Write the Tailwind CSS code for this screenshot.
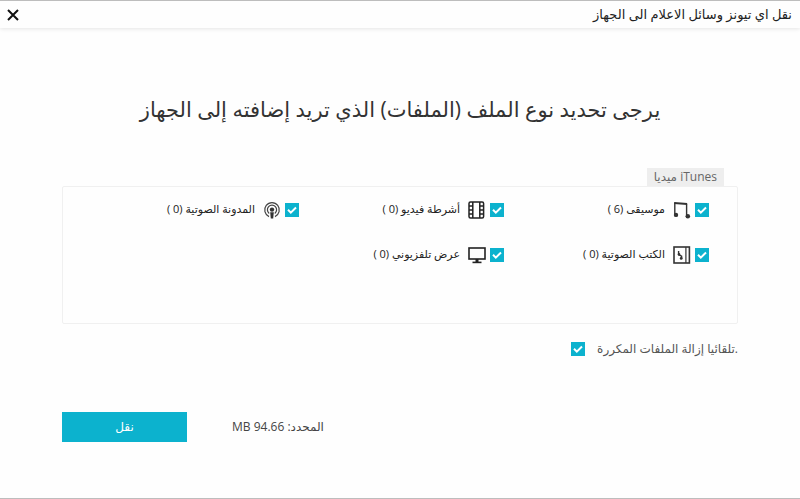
<!DOCTYPE html>
<html lang="ar" dir="rtl">
<head>
  <meta charset="UTF-8" />
  <meta name="viewport" content="width=device-width, initial-scale=1" />
  <title>نقل اي تيونز وسائل الاعلام الى الجهاز</title>
  <script src="https://cdn.jsdelivr.net/npm/@tailwindcss/browser@4"></script>
</head>
<body class="flex min-h-screen flex-col border-y border-[#bdbdbd] bg-[#fefefe] font-['Open_Sans','Noto_Sans','DejaVu_Sans',sans-serif] text-[#333]">

  <!-- Title bar -->
  <header class="flex h-[27px] items-center justify-between px-2 shadow-[0_1px_4px_rgba(0,0,0,0.1)]">
    <h1 class="text-[13px] text-[#222]">نقل اي تيونز وسائل الاعلام الى الجهاز</h1>
    <button type="button" aria-label="إغلاق" class="-me-px size-3">
      <svg viewBox="0 0 12 12" class="block size-3" fill="none" stroke="#111" stroke-width="2">
        <path d="M1 1l10 10M11 1L1 11" />
      </svg>
    </button>
  </header>

  <main class="px-[62px] pt-[63px]">
    <h2 class="text-center text-[21px] leading-9">يرجى تحديد نوع الملف (الملفات) الذي تريد إضافته إلى الجهاز</h2>

    <!-- Media types -->
    <div class="mt-[41px] flex px-[14px]">
      <h3 class="h-[18px] bg-[#eee] px-[7px] text-xs leading-[18px] text-[#666]">iTunes ميديا</h3>
    </div>
    <div class="grid h-[138px] grid-cols-[205px_205px_1fr] grid-rows-[45px_45px] rounded-xs border border-[#f0f0f0] px-7 text-[11px] text-[#222]">
      <label class="flex items-center">
        <span class="grid size-[14px]">
          <input type="checkbox" checked class="peer col-start-1 row-start-1 size-[14px] appearance-none bg-[#0cb2ce]" />
          <svg viewBox="0 0 14 14" class="pointer-events-none col-start-1 row-start-1 hidden size-[14px] peer-checked:block" fill="none" stroke="#fff" stroke-width="2"><path d="M3 6.8l2.8 2.8L11 4.5" /></svg>
        </span>
        <svg viewBox="0 0 18 18" class="ms-1 size-[18px]" fill="none" stroke="#333" stroke-width="1.4">
          <path d="M1.8 13V1.6M13.6 3v11" /><path d="M1.2 2l12.9 1" stroke-width="2.2" />
          <circle cx="3" cy="13.9" r="2.2" fill="#333" stroke="none" /><circle cx="14.8" cy="15.2" r="2.3" fill="#333" stroke="none" />
        </svg>
        <span class="ms-2">موسيقى (6 )</span>
      </label>
      <label class="flex items-center">
        <span class="grid size-[14px]">
          <input type="checkbox" checked class="peer col-start-1 row-start-1 size-[14px] appearance-none bg-[#0cb2ce]" />
          <svg viewBox="0 0 14 14" class="pointer-events-none col-start-1 row-start-1 hidden size-[14px] peer-checked:block" fill="none" stroke="#fff" stroke-width="2"><path d="M3 6.8l2.8 2.8L11 4.5" /></svg>
        </span>
        <svg viewBox="0 0 18 18" class="ms-1 size-[18px]" fill="none" stroke="#222" stroke-width="1.5">
          <rect x="1" y="1" width="14.6" height="16" rx="1.5" />
          <path d="M4.8 1v16M11.8 1v16M1 5h3.8M1 9h3.8M1 13h3.8M11.8 5h3.8M11.8 9h3.8M11.8 13h3.8" />
        </svg>
        <span class="ms-2">أشرطة فيديو (0 )</span>
      </label>
      <label class="flex items-center">
        <span class="grid size-[14px]">
          <input type="checkbox" checked class="peer col-start-1 row-start-1 size-[14px] appearance-none bg-[#0cb2ce]" />
          <svg viewBox="0 0 14 14" class="pointer-events-none col-start-1 row-start-1 hidden size-[14px] peer-checked:block" fill="none" stroke="#fff" stroke-width="2"><path d="M3 6.8l2.8 2.8L11 4.5" /></svg>
        </span>
        <svg viewBox="0 0 18 18" class="ms-1 size-[18px]" fill="none" stroke="#444" stroke-width="1.2">
          <path d="M6 15.6a7.3 7.3 0 1 1 6 0" /><path d="M6.2 12.4a4.6 4.6 0 1 1 5.6 0" />
          <circle cx="9" cy="8.6" r="2.2" fill="#333" stroke="none" />
          <path d="M7.2 11.2h3.6l-.6 6.4H7.8z" fill="#333" stroke="none" />
        </svg>
        <span class="ms-2">المدونة الصوتية (0 )</span>
      </label>
      <label class="flex items-center">
        <span class="grid size-[14px]">
          <input type="checkbox" checked class="peer col-start-1 row-start-1 size-[14px] appearance-none bg-[#0cb2ce]" />
          <svg viewBox="0 0 14 14" class="pointer-events-none col-start-1 row-start-1 hidden size-[14px] peer-checked:block" fill="none" stroke="#fff" stroke-width="2"><path d="M3 6.8l2.8 2.8L11 4.5" /></svg>
        </span>
        <svg viewBox="0 0 18 18" class="ms-1 size-[18px]" fill="none" stroke="#333" stroke-width="1.6">
          <rect x="1" y="1" width="15.4" height="16" /><path d="M12.9 1v16" stroke-width="1.2" />
          <path d="M5.6 5v3.6l3 1.6v2.6" stroke-width="1.4" />
          <circle cx="6" cy="8.4" r="1.3" fill="#333" stroke="none" /><circle cx="8.2" cy="12.4" r="1.4" fill="#333" stroke="none" />
        </svg>
        <span class="ms-2">الكتب الصوتية (0 )</span>
      </label>
      <label class="flex items-center">
        <span class="grid size-[14px]">
          <input type="checkbox" checked class="peer col-start-1 row-start-1 size-[14px] appearance-none bg-[#0cb2ce]" />
          <svg viewBox="0 0 14 14" class="pointer-events-none col-start-1 row-start-1 hidden size-[14px] peer-checked:block" fill="none" stroke="#fff" stroke-width="2"><path d="M3 6.8l2.8 2.8L11 4.5" /></svg>
        </span>
        <svg viewBox="0 0 18 18" class="ms-1 size-[18px]" fill="none" stroke="#222" stroke-width="1.6">
          <rect x="1" y="2" width="16" height="11" /><path d="M9 13v3" stroke-width="3" /><path d="M4.5 16.4h9" />
        </svg>
        <span class="ms-2">عرض تلفزيوني (0 )</span>
      </label>
    </div>

    <div class="mt-[17px] flex items-center gap-3 text-xs text-[#555]">
      <label for="dedupe">.تلقائيا إزالة الملفات المكررة</label>
      <span class="grid size-[14px]">
        <input id="dedupe" type="checkbox" checked class="peer col-start-1 row-start-1 size-[14px] appearance-none bg-[#0cb2ce]" />
        <svg viewBox="0 0 14 14" class="pointer-events-none col-start-1 row-start-1 hidden size-[14px] peer-checked:block" fill="none" stroke="#fff" stroke-width="2"><path d="M3 6.8l2.8 2.8L11 4.5" /></svg>
      </span>
    </div>

    <!-- Actions -->
    <div class="mt-[55px] flex items-center justify-end gap-[45px]">
      <p class="text-xs text-[#444]">المحدد: 94.66 MB</p>
      <button type="button" class="h-[30px] w-[125px] bg-[#0cb2ce] text-xs text-white">نقل</button>
    </div>
  </main>

</body>
</html>
